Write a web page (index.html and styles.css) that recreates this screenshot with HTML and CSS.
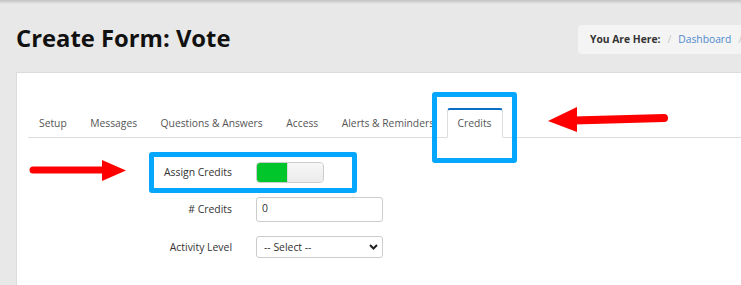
FILE: index.html
```html
<!DOCTYPE html>
<html lang="en">
<head>
  <meta charset="UTF-8">
  <meta name="viewport" content="width=device-width, initial-scale=1.0">
  <title>Create Form: Vote</title>
  <link rel="stylesheet" href="styles.css">
</head>
<body>
  <div class="page-header">
    <h1>Create Form: Vote</h1>
    <div class="breadcrumb">
      <strong>You Are Here:</strong><span class="sep">/</span><a href="#">Dashboard</a><span class="sep">/</span>
    </div>
  </div>

  <div class="panel">
    <ul class="tabs">
      <li><a href="#">Setup</a></li>
      <li><a href="#">Messages</a></li>
      <li><a href="#">Questions &amp; Answers</a></li>
      <li><a href="#">Access</a></li>
      <li><a href="#">Alerts &amp; Reminders</a></li>
      <li class="active"><a href="#">Credits</a></li>
    </ul>

    <form class="credits-form">
      <label>Assign Credits</label>
      <div class="switch">
        <span class="switch-on"></span>
        <span class="switch-handle"></span>
      </div>

      <label for="credits"># Credits</label>
      <input id="credits" class="field" type="text" value="0">

      <label for="activity">Activity Level</label>
      <select id="activity" class="field select">
        <option>-- Select --</option>
      </select>
    </form>
  </div>

  <!-- annotation overlays -->
  <div class="callout callout-tab"></div>
  <div class="callout callout-switch"></div>
  <svg class="arrow" width="741" height="285" viewBox="0 0 741 285">
    <line x1="33" y1="170" x2="104" y2="170" stroke="#ff0000" stroke-width="7" stroke-linecap="round"/>
    <polygon points="102,160 126,170.5 102,181" fill="#ff0000"/>
    <line x1="574" y1="120.5" x2="664" y2="118" stroke="#ff0000" stroke-width="8" stroke-linecap="round"/>
    <polygon points="548,121 577,107 577,132" fill="#ff0000"/>
  </svg>
</body>
</html>
```

FILE: styles.css
```css
:root {
  --page-bg: #e8e8e8;
  --border: #dddddd;
  --text: #333;
  --muted: #555;
  --link: #4f88cf;
  --callout: #05a6fd;
}

html, body {
  overflow: hidden;
}

body {
  margin: 0;
  height: 285px;
  font-family: "Open Sans", Arial, sans-serif;
  color: var(--text);
  background: linear-gradient(#c2c2c2, var(--page-bg) 4px);
}

.page-header {
  display: flex;
  align-items: flex-start;
  height: 29px;
  padding: 25px 0 0 16px;
  margin-bottom: 18px;
}

.page-header h1 {
  flex: 1;
  margin: -1px 0 0;
  font-size: 23.8px;
  line-height: 28px;
  font-weight: 700;
  color: #111;
}

.breadcrumb {
  flex: none;
  box-sizing: border-box;
  width: 200px;
  margin-right: -37px;
  padding: 6px 12px;
  font-size: 10.3px;
  line-height: 17px;
  white-space: nowrap;
  overflow: hidden;
  background-color: #f4f4f4;
  border-radius: 4px;
}

.breadcrumb strong {
  color: #333;
}

.breadcrumb .sep {
  padding: 0 7px;
  color: #c8c8c8;
}

.breadcrumb a {
  color: var(--link);
  text-decoration: none;
}

.panel {
  box-sizing: border-box;
  margin: 0 -20px 0 16px;
  height: 213px;
  padding: 35px 0 0 12px;
  background-color: #fff;
  border: 1px solid #dcdcdc;
  border-bottom: none;
}

.tabs {
  display: flex;
  list-style: none;
  margin: 0 0 0 -1px;
  padding: 0;
  border-bottom: 1px solid var(--border);
}

.tabs li {
  margin-bottom: -1px;
}

.tabs a {
  display: block;
  margin-right: 1.5px;
  padding: 6px 10px;
  font-size: 10.3px;
  line-height: 15px;
  color: var(--muted);
  text-decoration: none;
  border: 1px solid transparent;
  border-top-width: 2px;
  border-radius: 3px 3px 0 0;
}

.tabs li.active a {
  background-color: #fff;
  border-color: var(--border);
  border-top-color: #0b6fc6;
  border-bottom-color: transparent;
}

.credits-form {
  display: grid;
  grid-template-columns: 203px auto;
  column-gap: 24px;
  row-gap: 14px;
  align-items: center;
  justify-items: start;
  margin-top: 24px;
  font-size: 10.4px;
  line-height: 15px;
}

.credits-form label {
  justify-self: end;
  color: var(--text);
}

.switch {
  display: flex;
  width: 68px;
  height: 21px;
  box-sizing: border-box;
  border: 1px solid #cccccc;
  border-radius: 4px;
  overflow: hidden;
}

.switch-on {
  width: 30px;
  background-color: #00c52b;
}

.switch-handle {
  flex: 1;
  background: linear-gradient(#f7f7f7, #ebebeb);
  border-left: 1px solid #dadada;
}

.field {
  box-sizing: border-box;
  width: 127px;
  margin: 0;
  font-family: "Open Sans", Arial, sans-serif;
  font-size: 10.4px;
  color: var(--text);
  background-color: #fff;
  border: 1px solid #cccccc;
  border-radius: 3px;
}

input.field {
  height: 25px;
  padding: 0 5px 4px;
}

.select {
  height: 22px;
  padding: 0 7px;
  appearance: none;
  -webkit-appearance: none;
  background-image: url("data:image/svg+xml,%3Csvg xmlns='http://www.w3.org/2000/svg' width='9' height='6' viewBox='0 0 9 6'%3E%3Cpath d='M1 1l3.5 3.5L8 1' fill='none' stroke='%23222' stroke-width='2'/%3E%3C/svg%3E");
  background-repeat: no-repeat;
  background-position: right 4px center;
}

.callout {
  position: absolute;
  box-sizing: border-box;
  border: 5px solid var(--callout);
  border-radius: 3px;
}

.callout-tab {
  left: 432px;
  top: 92px;
  width: 85px;
  height: 71px;
}

.callout-switch {
  left: 149px;
  top: 152px;
  width: 208px;
  height: 41px;
}

.arrow {
  position: absolute;
  left: 0;
  top: 0;
}
```
